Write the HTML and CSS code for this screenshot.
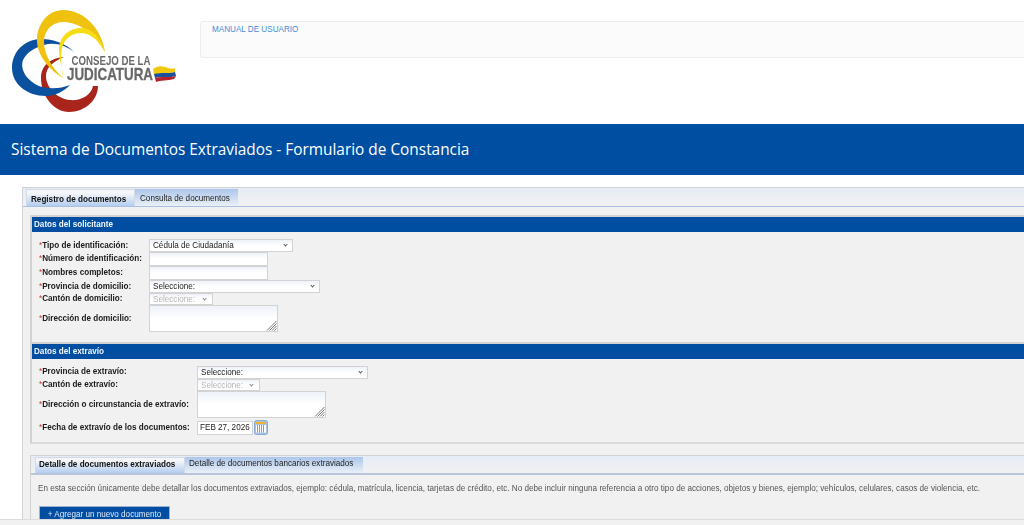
FILE: index.html
```html
<!DOCTYPE html>
<html lang="es">
<head>
<meta charset="utf-8">
<title>Sistema de Documentos Extraviados</title>
<link rel="stylesheet" href="styles.css">
</head>
<body>
<header class="top">
  <div class="logo">
    <svg width="200" height="124" viewBox="0 0 200 124">
      <path fill="#a9241b" d="M64 57C50 58 41 66 41 78C41 96 54 112 69 112C85 112 98 100 98 86L93 86C91 96 80 101 70 100C58 99 46 88 46 76C46 67 54 61 64 57Z"/>
      <path fill="#0a519f" d="M75 53C66 43 52 39 42 39C24 39 12 52 12 68C12 84 27 96 46 96C56 96 64 91 70 85C60 89 45 90 35 84C25 78 20 68 23 60C27 52 34 48 44 45C54 42 66 45 75 53Z"/>
      <path fill="#eec20f" d="M105 52C102 30 85 10 63 10C48 10 37 24 37 40C37 56 50 70 63 78C52 68 44 54 44 42C44 30 52 22 64 22C80 22 96 36 105 52Z"/>
      <path fill="#f6dc12" d="M105 52C101 38 92 28 81 28C68 28 59 38 59 50C59 62 64 72 63 78C62 68 60 58 62 48C64 39 72 33 81 33C91 33 100 42 105 52Z"/>
      <path fill="#f2c80e" d="M153 69C158 65 163 66 168 68C171 69 174 69 175 68L175 72C170 74 160 72 154 75Z"/>
      <path fill="#1c4f9c" d="M154 74C160 72 170 74 175 72L176 76C170 78 160 76 155 78Z"/>
      <path fill="#b8222a" d="M155 78C160 76 170 78 176 76L174 79C168 81 160 80 156 82Z"/>
      <text class="logo-small" x="71.5" y="65" textLength="79" lengthAdjust="spacingAndGlyphs">CONSEJO DE LA</text>
      <text class="logo-big" x="67" y="79.500" textLength="86" lengthAdjust="spacingAndGlyphs">JUDICATURA</text>
    </svg>
  </div>
  <div class="manual"><a href="#">MANUAL DE USUARIO</a></div>
</header>

<div class="banner">Sistema de Documentos Extraviados - Formulario de Constancia</div>

<main class="page">
  <div class="outer">
    <nav class="tabs tabs-main">
      <span class="tab tab-on tab-reg">Registro de documentos</span>
      <span class="tab tab-off tab-con">Consulta de documentos</span>
    </nav>

    <section class="box box-a">
      <h2 class="box-title">Datos del solicitante</h2>
      <div class="form form-a">
        <label class="lab h-sel1"><i>*</i>Tipo de identificación:</label>
        <div class="ctl h-sel1"><span class="sel w-tipo">Cédula de Ciudadanía<b class="chev"></b></span></div>
        <label class="lab h-inp"><i>*</i>Número de identificación:</label>
        <div class="ctl h-inp"><span class="inp w-inp"></span></div>
        <label class="lab h-inp"><i>*</i>Nombres completos:</label>
        <div class="ctl h-inp"><span class="inp w-inp"></span></div>
        <label class="lab h-sel1"><i>*</i>Provincia de domicilio:</label>
        <div class="ctl h-sel1"><span class="sel w-prov">Seleccione:<b class="chev"></b></span></div>
        <label class="lab h-sel"><i>*</i>Cantón de domicilio:</label>
        <div class="ctl h-sel"><span class="sel sel-off w-can">Seleccione:<b class="chev"></b></span></div>
        <label class="lab h-area"><i>*</i>Dirección de domicilio:</label>
        <div class="ctl h-area"><span class="area w-area"><svg class="grip" width="11" height="11" viewBox="0 0 11 11"><path d="M10.5 1 1 10.5M10.5 3.500 3.500 10.500M10.500 6 6 10.500M10.500 8.500 8.500 10.500" stroke="#777" stroke-width="1"/></svg></span></div>
      </div>
    </section>

    <section class="box box-b">
      <h2 class="box-title">Datos del extravío</h2>
      <div class="form form-b">
        <label class="lab h-sel"><i>*</i>Provincia de extravío:</label>
        <div class="ctl h-sel"><span class="sel w-prov2">Seleccione:<b class="chev"></b></span></div>
        <label class="lab h-sel"><i>*</i>Cantón de extravío:</label>
        <div class="ctl h-sel"><span class="sel sel-off w-can2">Seleccione:<b class="chev"></b></span></div>
        <label class="lab h-area"><i>*</i>Dirección o circunstancia de extravío:</label>
        <div class="ctl h-area"><span class="area w-area2"><svg class="grip" width="11" height="11" viewBox="0 0 11 11"><path d="M10.5 1 1 10.5M10.5 3.500 3.500 10.500M10.500 6 6 10.500M10.500 8.500 8.500 10.500" stroke="#777" stroke-width="1"/></svg></span></div>
        <label class="lab h-date"><i>*</i>Fecha de extravío de los documentos:</label>
        <div class="ctl h-date">
          <span class="inp w-date">FEB 27, 2026</span>
          <svg class="cal" width="14" height="15" viewBox="0 0 14 15">
            <rect x=".5" y=".5" width="13" height="14" rx="2" fill="#a9c4e6" stroke="#8aa8d0"/>
            <rect x="2" y="2" width="10" height="2" fill="#f0b030"/>
            <rect x="2" y="5" width="10" height="7.500" fill="#fff"/>
            <path d="M3.500 5v7.500M5.500 5v7.500M7.500 5v7.500M9.500 5v7.500" stroke="#7f9cc4"/>
          </svg>
        </div>
      </div>
    </section>

    <section class="detail">
      <nav class="tabs tabs-sub">
        <span class="tab tab-on tab-det">Detalle de documentos extraviados</span>
        <span class="tab tab-off tab-ban">Detalle de documentos bancarios extraviados</span>
      </nav>
      <p class="note">En esta sección únicamente debe detallar los documentos extraviados, ejemplo: cédula, matrícula, licencia, tarjetas de crédito, etc. No debe incluir ninguna referencia a otro tipo de acciones, objetos y bienes, ejemplo; vehículos, celulares, casos de violencia, etc.</p>
      <button class="add" type="button">+ Agregar un nuevo documento</button>
    </section>
  </div>
</main>
<div class="hscroll"></div>
</body>
</html>
```
FILE: styles.css
```css
* { box-sizing: border-box; }
html, body { margin: 0; height: 525px; overflow: hidden; background: #fff; }
body { font-family: "Liberation Sans", Arial, sans-serif; font-size: 8.130px; color: #222; position: relative; }

.top { display: flex; height: 124px; filter: blur(.35px); }
.logo { width: 200px; flex: none; }
.logo svg { display: block; }
.logo-small { font: bold 13.500px "Liberation Sans", sans-serif; fill: #6a6a6a; }
.logo-big { font: bold 17px "Liberation Sans", sans-serif; fill: #686868; stroke: #686868; stroke-width: .3px; }
.manual { flex: 1; height: 37px; margin-top: 21px; padding: 3px 11px; background: #fbfbfb; border: 1px solid #eeeeee; border-right: 0; border-radius: 3px 0 0 3px; }
.manual a { color: #3f8ed8; text-decoration: none; font-size: 8.130px; line-height: 10px; display: block; }

.banner { height: 51px; background: #004ea2; color: #fff; font-family: "Open Sans", sans-serif; font-size: 15.400px; line-height: 52px; padding-left: 11px; }

.page { padding: 12px 0 0 22px; filter: blur(.35px); }
.outer { width: 1100px; height: 340px; background: #f1f1f1; border: 1px solid #cfd2d6; border-right: 0; border-bottom: 0; padding-left: 7px; }

.tabs { display: flex; background: linear-gradient(#e6ecf5, #f1f1f3); }
.tabs-main { height: 19px; margin-left: -7px; padding: 1px 0 0 3px; border-bottom: 1px solid #a9c0e0; }
.tab { display: block; line-height: 10px; white-space: nowrap; }
.tabs-main .tab { padding-top: 5px; }
.tabs-sub .tab { padding-top: 1.500px; }
.tab-on { font-weight: bold; color: #111; background: linear-gradient(#f4f6f9 20%, #b3cdef); border: 1px solid #d5dbe4; border-bottom: 0; }
.tab-off { color: #222; background: linear-gradient(#acc6ea, #eaf0f8); }
.tab-reg { width: 109px; padding-left: 4px; }
.tab-con { width: 103px; padding-left: 5px; }

.box { margin-top: 8px; border: solid #d2d2d2; border-width: 2px 0 0 2px; }
.box-a { height: 126.500px; }
.box-b { height: 102px; margin-top: 0; border-bottom: 2px solid #dcdcdc; }
.box-title { margin: 0; height: 15px; background: #004ea2; color: #f2f6fc; font-size: 8.130px; font-weight: bold; line-height: 15px; padding-left: 2px; }

.form { display: grid; padding-left: 7px; }
.form-a { grid-template-columns: 110px 1fr; padding-top: 7.500px; }
.form-b { grid-template-columns: 158px 1fr; padding-top: 7.500px; }
.lab { display: flex; align-items: center; font-weight: bold; color: #1a1a1a; line-height: 10px; white-space: nowrap; }
.lab i { color: #d0342c; font-weight: normal; font-style: normal; }
.ctl { display: flex; align-items: center; }
.h-sel1 { height: 12px; }
.h-sel { height: 12.500px; }
.h-inp { height: 14.500px; }
.h-area { height: 27px; }
.h-date { height: 19px; }

.sel, .inp, .area { display: block; position: relative; background: linear-gradient(#eef2f9, #fff 50%); border: 1px solid #d3d3d3; white-space: nowrap; }
.sel { height: 12.500px; line-height: 11.500px; padding-left: 3px; color: #222; }
.sel-off { color: #b4b4b4; }
.inp { height: 14px; line-height: 12px; padding-left: 2px; }
.area { height: 27px; }
.chev { position: absolute; right: 5px; top: 3px; width: 3px; height: 3px; border: solid #555; border-width: 0 1px 1px 0; transform: rotate(45deg); }
.sel-off .chev { border-color: #888; right: 6px; }
.grip { position: absolute; right: 0; bottom: 0; }
.w-tipo { width: 143.500px; }
.w-inp { width: 118.500px; }
.w-prov { width: 170.500px; }
.w-can { width: 63.500px; }
.w-area { width: 128.500px; }
.w-prov2 { width: 171px; }
.w-can2 { width: 63px; }
.w-area2 { width: 129px; }
.w-date { width: 56px; background: #fff; }
.cal { margin-left: 1px; flex: none; }

.detail { margin-top: 11.500px; border: solid #d2d2d2; border-width: 1px 0 0 1px; height: 80px; }
.tabs-sub { height: 19px; padding: 1px 0 0 4px; border-bottom: 2px solid #b9c6da; }
.tab-det { width: 150px; padding-left: 3px; }
.tab-ban { width: 178px; padding-left: 4px; }
.note { margin: 7.500px 0 0 7px; color: #555; line-height: 11px; white-space: nowrap; }
.add { display: block; margin: 12px 0 0 8px; width: 131px; height: 16px; padding: 0; background: #004ea2; color: #dfe9f7; border: 1px solid #9fb3d0; border-bottom: 0; font: 8.130px "Liberation Sans", sans-serif; }

.hscroll { position: absolute; left: 0; right: 0; bottom: 0; height: 6px; background: #f1f1f1; border-top: 1px solid #dcdcdc; }
```
